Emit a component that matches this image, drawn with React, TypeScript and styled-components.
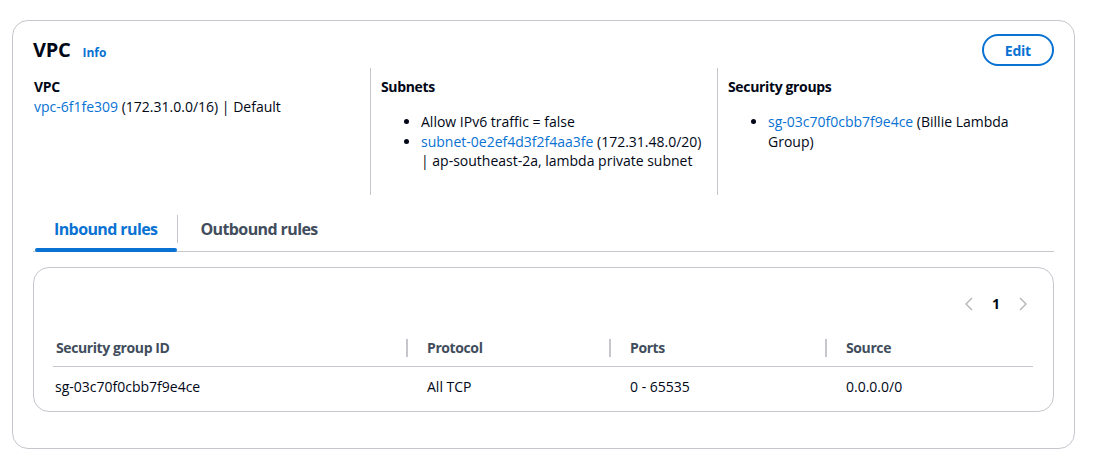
import React from "react";
import styled, { createGlobalStyle } from "styled-components";

const Global = createGlobalStyle`
  html, body { margin: 0; padding: 0; background: #ffffff; }
  body { font-family: "Open Sans", "Liberation Sans", sans-serif; color: #000716; font-size: 14px; line-height: 20px; }
  * { box-sizing: border-box; }
`;

const Card = styled.section`
  margin: 20px 0 0 12px;
  width: 1063px;
  border: 1px solid #c6c6cd;
  border-radius: 16px;
  padding: 13px 20px 36px 20px;
`;

const Header = styled.div`
  display: flex;
  align-items: center;
  justify-content: space-between;
  height: 32px;
`;

const TitleWrap = styled.div`
  display: flex;
  align-items: baseline;
  gap: 12px;
`;

const Title = styled.h2`
  margin: 0;
  font-size: 20px;
  line-height: 24px;
  font-weight: 700;
  letter-spacing: -0.3px;
  color: #000716;
`;

const InfoLink = styled.a`
  font-size: 12px;
  font-weight: 700;
  color: #0972d3;
  text-decoration: none;
`;

const EditButton = styled.button`
  font-family: inherit;
  height: 32px;
  padding: 0 21px;
  border: 2px solid #0972d3;
  border-radius: 20px;
  background: #fff;
  color: #0972d3;
  font-size: 14px;
  font-weight: 700;
  letter-spacing: -0.2px;
`;

const Columns = styled.div`
  display: grid;
  grid-template-columns: repeat(3, 1fr);
  margin: 2px -10px 0 -10px;
`;

const Column = styled.div<{ $divider?: boolean }>`
  padding: 9px 10px 24px 10px;
  border-left: 1px solid ${(p) => (p.$divider ? "#c6c6cd" : "transparent")};
`;

const Label = styled.div`
  font-weight: 700;
  letter-spacing: -0.35px;
`;

const Link = styled.a`
  color: #0972d3;
  text-decoration: none;
`;

const List = styled.ul`
  margin: 15px 0 0 0;
  padding-left: 40px;
  li { line-height: 19.5px; }
`;

const TabList = styled.div`
  display: flex;
  align-items: center;
  margin-top: 11px;
  height: 46px;
  border-bottom: 1px solid #c6c6cd;
`;

const Tab = styled.div<{ $active?: boolean }>`
  position: relative;
  height: 46px;
  display: flex;
  align-items: center;
  padding: 2px 20px 0 ${(p) => (p.$active ? "19px" : "22px")};
  margin-left: ${(p) => (p.$active ? "2px" : "0")};
  font-size: 16px;
  font-weight: 700;
  letter-spacing: -0.6px;
  color: ${(p) => (p.$active ? "#0972d3" : "#414d5c")};
  &::after {
    content: "";
    display: ${(p) => (p.$active ? "block" : "none")};
    position: absolute;
    left: 0;
    right: 0;
    bottom: -1px;
    height: 4px;
    border-radius: 4px;
    background: #0972d3;
  }
`;

const TabSep = styled.span`
  width: 1px;
  height: 28px;
  background: #c6c6cd;
  align-self: flex-start;
  margin-top: 9px;
`;

const TableBox = styled.div`
  margin-top: 15px;
  border: 1px solid #c6c6cd;
  border-radius: 16px;
  padding: 20px 20px 5px 19px;
`;

const Pager = styled.div`
  display: flex;
  justify-content: flex-end;
  align-items: center;
  height: 32px;
  gap: 18px;
  padding-right: 5px;
`;

const PageNum = styled.span`
  font-weight: 700;
  color: #000716;
`;

const Table = styled.div`
  margin-top: 11px;
  display: grid;
  grid-template-columns: 353px 203px 216px 1fr;
`;

const HeadCell = styled.div<{ $first?: boolean }>`
  display: flex;
  align-items: center;
  height: 36px;
  border-bottom: 1px solid #c6c6cd;
  padding-left: ${(p) => (p.$first ? "3px" : "0")};
  font-weight: 700;
  letter-spacing: -0.4px;
  color: #414d5c;
`;

const HeadDivider = styled.span`
  width: 2px;
  height: 18px;
  background: #c6c6cd;
  margin-right: 19px;
`;

const Cell = styled.div<{ $first?: boolean }>`
  padding: 10px 0 9px ${(p) => (p.$first ? "2px" : "21px")};
  color: #000716;
`;

const Chevron = ({ dir }: { dir: "left" | "right" }) => (
  <svg width="10" height="14" viewBox="0 0 10 14" fill="none" stroke="#b4b4bb" strokeWidth="1.4">
    {dir === "left" ? <path d="M8 1 2 7l6 6" /> : <path d="M2 1l6 6-6 6" />}
  </svg>
);

export default function App() {
  const headers = ["Security group ID", "Protocol", "Ports", "Source"];
  const row = ["sg-03c70f0cbb7f9e4ce", "All TCP", "0 - 65535", "0.0.0.0/0"];
  return (
    <>
      <Global />
      <Card>
        <Header>
          <TitleWrap>
            <Title>VPC</Title>
            <InfoLink>Info</InfoLink>
          </TitleWrap>
          <EditButton>Edit</EditButton>
        </Header>
        <Columns>
          <Column>
            <Label>VPC</Label>
            <div>
              <Link>vpc-6f1fe309</Link> (172.31.0.0/16) | Default
            </div>
          </Column>
          <Column $divider>
            <Label>Subnets</Label>
            <List>
              <li>Allow IPv6 traffic = false</li>
              <li>
                <Link>subnet-0e2ef4d3f2f4aa3fe</Link> (172.31.48.0/20) | ap-southeast-2a, lambda private subnet
              </li>
            </List>
          </Column>
          <Column $divider>
            <Label>Security groups</Label>
            <List>
              <li>
                <Link>sg-03c70f0cbb7f9e4ce</Link> (Billie Lambda Group)
              </li>
            </List>
          </Column>
        </Columns>
        <TabList>
          <Tab $active>Inbound rules</Tab>
          <TabSep />
          <Tab>Outbound rules</Tab>
        </TabList>
        <TableBox>
          <Pager>
            <Chevron dir="left" />
            <PageNum>1</PageNum>
            <Chevron dir="right" />
          </Pager>
          <Table>
            {headers.map((h, i) => (
              <HeadCell key={h} $first={i === 0}>
                {i > 0 && <HeadDivider />}
                {h}
              </HeadCell>
            ))}
            {row.map((c, i) => (
              <Cell key={i} $first={i === 0}>
                {c}
              </Cell>
            ))}
          </Table>
        </TableBox>
      </Card>
    </>
  );
}
